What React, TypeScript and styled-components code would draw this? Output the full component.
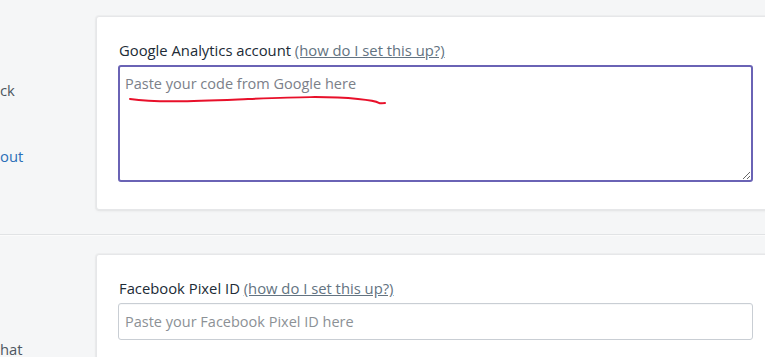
import styled, {createGlobalStyle} from "styled-components";

const GlobalStyle = createGlobalStyle`
  html, body {
    margin: 0;
    padding: 0;
    background: #f5f6f7;
    overflow: hidden;
  }
  body {
    font-family: "Open Sans", "Noto Sans", sans-serif;
    font-size: 14.8px;
    color: #212b36;
  }
`

const Page = styled.div`
  display: flex;
  flex-direction: column;
  width: 765px;
`

const Section = styled.section<{ $top: number }>`
  display: flex;
  padding-top: ${p => p.$top}px;
  padding-bottom: 24px;
  border-bottom: 1px solid #e1e3e5;
  & + & {
    border-top: 1px solid #fbfbfb;
  }
`

const Aside = styled.div`
  width: 96px;
  flex-shrink: 0;
  line-height: 20px;
`

const AsideLine = styled.div<{ $gap: number; $link?: boolean }>`
  margin-top: ${p => p.$gap}px;
  color: ${p => (p.$link ? "#2a6fb8" : "#4d5660")};
`

const Card = styled.div`
  width: 680px;
  flex-shrink: 0;
  background: #fff;
  border: 1px solid #e6e7e9;
  border-radius: 3px;
  box-shadow: 0 0 0 1px rgba(63, 63, 68, 0.03), 0 1px 3px rgba(63, 63, 68, 0.08);
  padding: 23px 22px 27px 21px;
  box-sizing: border-box;
`

const Label = styled.label`
  display: block;
  line-height: 20px;
  color: #212b36;
  margin-bottom: 5px;
  padding-left: 1px;
`

const HelpLink = styled.a`
  color: #637381;
  text-decoration: underline;
`

const FieldWrap = styled.div`
  position: relative;
`

const TextArea = styled.textarea`
  display: block;
  width: 100%;
  height: 117px;
  box-sizing: border-box;
  border: 2px solid #6a63b5;
  border-radius: 3px;
  padding: 7px 5px;
  font-family: inherit;
  font-size: 14.5px;
  line-height: 20px;
  color: #212b36;
  outline: none;
  &::placeholder {
    color: #7b8089;
  }
`

const Input = styled.input`
  display: block;
  width: 100%;
  height: 37px;
  box-sizing: border-box;
  border: 1px solid #c9ced4;
  border-radius: 3px;
  padding: 0 6px;
  font-family: inherit;
  font-size: 14.5px;
  color: #212b36;
  outline: none;
  box-shadow: inset 0 1px 0 rgba(99, 115, 129, 0.05);
  &::placeholder {
    color: #8c9196;
  }
`

const Scribble = styled.svg`
  position: absolute;
  left: 0;
  top: 0;
  pointer-events: none;
`

const App = () => {
    return (<Page>
        <GlobalStyle/>
        <Section $top={16}>
            <Aside>
                <AsideLine $gap={64}>ck</AsideLine>
                <AsideLine $gap={46} $link>out</AsideLine>
            </Aside>
            <Card>
                <Label>
                    Google Analytics account <HelpLink href="#">(how do I set this up?)</HelpLink>
                </Label>
                <FieldWrap>
                    <TextArea placeholder="Paste your code from Google here"/>
                    <Scribble width="300" height="50">
                        <path d="M12 34 C 40 38, 80 36, 130 34 S 210 31, 240 34 S 255 39, 267 38"
                              fill="none" stroke="#e8102a" strokeWidth="2" strokeLinecap="round"/>
                    </Scribble>
                </FieldWrap>
            </Card>
        </Section>
        <Section $top={18}>
            <Aside>
                <AsideLine $gap={85}>hat</AsideLine>
            </Aside>
            <Card>
                <Label>
                    Facebook Pixel ID <HelpLink href="#">(how do I set this up?)</HelpLink>
                </Label>
                <Input placeholder="Paste your Facebook Pixel ID here"/>
            </Card>
        </Section>
    </Page>)
}

export default App
